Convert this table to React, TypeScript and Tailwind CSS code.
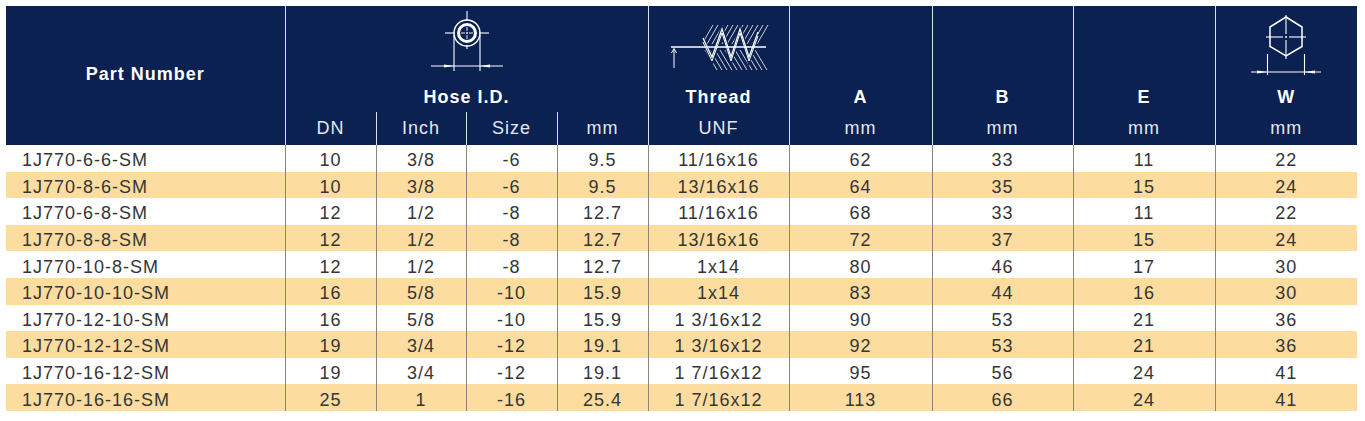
const rows = [
  ['1J770-6-6-SM', '10', '3/8', '-6', '9.5', '11/16x16', '62', '33', '11', '22'],
  ['1J770-8-6-SM', '10', '3/8', '-6', '9.5', '13/16x16', '64', '35', '15', '24'],
  ['1J770-6-8-SM', '12', '1/2', '-8', '12.7', '11/16x16', '68', '33', '11', '22'],
  ['1J770-8-8-SM', '12', '1/2', '-8', '12.7', '13/16x16', '72', '37', '15', '24'],
  ['1J770-10-8-SM', '12', '1/2', '-8', '12.7', '1x14', '80', '46', '17', '30'],
  ['1J770-10-10-SM', '16', '5/8', '-10', '15.9', '1x14', '83', '44', '16', '30'],
  ['1J770-12-10-SM', '16', '5/8', '-10', '15.9', '1 3/16x12', '90', '53', '21', '36'],
  ['1J770-12-12-SM', '19', '3/4', '-12', '19.1', '1 3/16x12', '92', '53', '21', '36'],
  ['1J770-16-12-SM', '19', '3/4', '-12', '19.1', '1 7/16x12', '95', '56', '24', '41'],
  ['1J770-16-16-SM', '25', '1', '-16', '25.4', '1 7/16x12', '113', '66', '24', '41'],
]

const widths = [279, 91, 90, 91, 91, 141, 143, 141, 142, 142]

// drawing of the hose bore with dimension arrows
function HoseIcon() {
  return (
    <svg width="90" height="80" viewBox="0 0 90 80" fill="none" stroke="white">
      <circle cx="45" cy="26" r="13" strokeWidth="1.4" />
      <circle cx="45" cy="26" r="8.5" strokeWidth="3" />
      <line x1="23" y1="26" x2="33" y2="26" strokeWidth="1.1" />
      <line x1="57" y1="26" x2="67" y2="26" strokeWidth="1.1" />
      <line x1="45" y1="4" x2="45" y2="14" strokeWidth="1.1" />
      <line x1="45" y1="38" x2="45" y2="42" strokeWidth="1.1" />
      <line x1="39" y1="26" x2="43" y2="26" strokeWidth="0.9" />
      <line x1="47" y1="26" x2="51" y2="26" strokeWidth="0.9" />
      <line x1="45" y1="20" x2="45" y2="24" strokeWidth="0.9" />
      <line x1="45" y1="28" x2="45" y2="32" strokeWidth="0.9" />
      <circle cx="45" cy="26" r="0.9" fill="white" stroke="none" />
      <line x1="32" y1="28" x2="32" y2="64" strokeWidth="1.1" />
      <line x1="58" y1="28" x2="58" y2="64" strokeWidth="1.1" />
      <line x1="9" y1="59" x2="81" y2="59" strokeWidth="1.1" />
      <polygon points="32,59 22,57.5 22,60.5" fill="white" stroke="none" />
      <polygon points="58,59 68,57.5 68,60.5" fill="white" stroke="none" />
    </svg>
  )
}

// thread profile with hatching
function ThreadIcon() {
  const top = [33, 38, 43, 48, 53, 58, 63, 68, 73, 78, 83, 88]
  const bottom = [36, 41, 46, 51, 56, 61, 66, 71, 76, 81, 86]
  return (
    <svg width="100" height="80" viewBox="0 0 100 80" fill="none" stroke="white" strokeWidth="0.8">
      {top.map((x) => (
        <line key={'t' + x} x1={x} y1={37} x2={x + 11} y2={18} />
      ))}
      {bottom.map((x) => (
        <line key={'b' + x} x1={x} y1={43} x2={x + 12} y2={63} />
      ))}
      <polyline
        points="34,33 43,52 53,24 62,52 71,24 80,52 89,27"
        stroke="#0a2151"
        strokeWidth="5"
      />
      <polyline points="34,31 43,50 53,22 62,50 71,22 80,50 89,25" strokeWidth="1.3" />
      <polyline points="34,35 43,54 53,26 62,54 71,26 80,54 89,29" strokeWidth="1" />
      <line x1="2" y1="40" x2="97" y2="40" strokeWidth="1.4" />
      <line x1="5" y1="42" x2="5" y2="61" strokeWidth="1" />
      <polyline points="2.5,46 5,41.5 7.5,46" strokeWidth="1" />
    </svg>
  )
}

// hexagon across flats
function HexIcon() {
  return (
    <svg width="90" height="80" viewBox="0 0 90 80" fill="none" stroke="white">
      <polygon points="45,10 61,20 61,39.5 45,49 29,39.5 29,20" strokeWidth="1.5" />
      <line x1="25" y1="30" x2="42" y2="30" strokeWidth="1.1" />
      <line x1="48" y1="30" x2="65" y2="30" strokeWidth="1.1" />
      <line x1="45" y1="8" x2="45" y2="27" strokeWidth="1.1" />
      <line x1="45" y1="33" x2="45" y2="52" strokeWidth="1.1" />
      <circle cx="45" cy="30" r="1" fill="white" stroke="none" />
      <line x1="26.5" y1="47" x2="26.5" y2="68" strokeWidth="1.1" />
      <line x1="63.5" y1="47" x2="63.5" y2="68" strokeWidth="1.1" />
      <line x1="10" y1="65" x2="80" y2="65" strokeWidth="1.1" />
      <polygon points="26.5,65 16,63.5 16,66.5" fill="white" stroke="none" />
      <polygon points="63.5,65 74,63.5 74,66.5" fill="white" stroke="none" />
    </svg>
  )
}

function HeadCell({ label, icon, span = 1 }: { label: string; icon?: React.ReactNode; span?: number }) {
  return (
    <th colSpan={span} className="border-l border-[#d9dee8] p-0 align-bottom">
      <div className="flex h-[106px] flex-col items-center justify-end pb-[5px]">
        {icon ?? <div className="h-[80px]" />}
        <span className="h-[20px] font-bold leading-[20px] text-white">{label}</span>
      </div>
    </th>
  )
}

function SubCell({ label }: { label: string }) {
  return (
    <th className="h-[33px] border-l border-[#d9dee8] p-0 text-center font-normal text-[#e3e7ef]">
      {label}
    </th>
  )
}

export default function App() {
  return (
    <div className="min-h-[421px] bg-white pl-[6px] pt-[6px] font-['Liberation_Sans',Arial,sans-serif] text-[18px] tracking-[1px]">
      <table className="w-[1351px] table-fixed border-collapse">
        <colgroup>
          {widths.map((w, i) => (
            <col key={i} style={{ width: w }} />
          ))}
        </colgroup>
        <thead className="bg-[#0a2151]">
          <tr>
            <th rowSpan={2} className="p-0 pb-[3px] text-center align-middle font-bold text-white">
              Part Number
            </th>
            <HeadCell label="Hose I.D." span={4} icon={<HoseIcon />} />
            <HeadCell label="Thread" icon={<ThreadIcon />} />
            <HeadCell label="A" />
            <HeadCell label="B" />
            <HeadCell label="E" />
            <HeadCell label="W" icon={<HexIcon />} />
          </tr>
          <tr>
            {['DN', 'Inch', 'Size', 'mm', 'UNF', 'mm', 'mm', 'mm', 'mm'].map((l, i) => (
              <SubCell key={i} label={l} />
            ))}
          </tr>
        </thead>
        <tbody className="text-[#353535]">
          {rows.map((r, i) => (
            <tr key={r[0]} className={`h-[26.6px] ${i % 2 === 1 ? 'bg-[#fddc9f]' : 'bg-white'}`}>
              {r.map((c, j) => (
                <td
                  key={j}
                  className={`p-0 pt-[4px] leading-[20px] ${
                    j === 0 ? 'pl-[16px] text-left' : 'border-l border-[#8c8276] text-center'
                  }`}
                >
                  {c}
                </td>
              ))}
            </tr>
          ))}
        </tbody>
      </table>
    </div>
  )
}
